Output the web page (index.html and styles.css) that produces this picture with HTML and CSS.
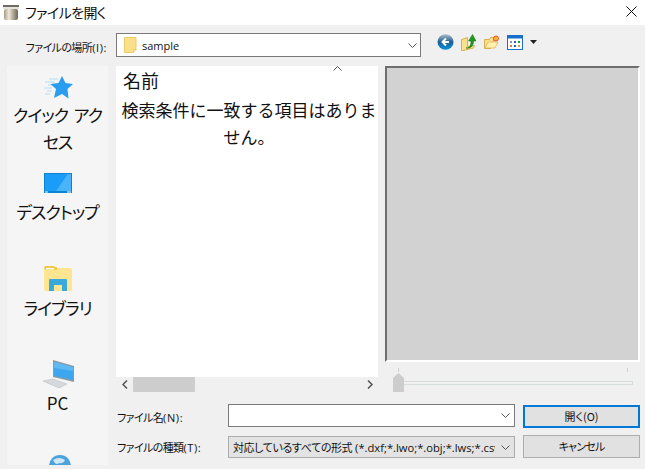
FILE: index.html
```html
<!DOCTYPE html>
<html lang="ja">
<head>
<meta charset="utf-8">
<title>ファイルを開く</title>
<link rel="stylesheet" href="styles.css">
</head>
<body>
<div class="dialog">
  <header class="titlebar">
    <svg class="app-icon" width="16" height="16" viewBox="0 0 16 16"><defs><linearGradient id="ag" x1="0" x2="1" y1="0" y2="0"><stop offset="0" stop-color="#a59c8a"/><stop offset=".35" stop-color="#efe8d6"/><stop offset=".7" stop-color="#a79f8d"/><stop offset="1" stop-color="#6d675b"/></linearGradient></defs><rect width="16" height="2" fill="#6e6a62"/><rect x="0" y="2" width="16" height="2" fill="#e4e2dc"/><rect x="1" y="4" width="14" height="11" rx="2" fill="url(#ag)"/></svg>
    <span class="title">ファイルを開く</span>
    <svg class="close" width="11" height="11" viewBox="0 0 11 11"><path d="M.5.5l10 10M10.500.5l-10 10" stroke="#111" stroke-width="1" fill="none"/></svg>
  </header>

  <div class="location-row">
    <label class="loc-label"><span class="lbl-jp">ファイルの場所</span><span class="lbl-key">(I):</span></label>
    <div class="loc-box">
      <svg width="13" height="16" viewBox="0 0 13 16"><path d="M.5.5h11.500v12.500l-2.500 2.500H.5z" fill="#fbe08a" stroke="#eccb6a"/><path d="M9.500 15.500v-3h3" fill="#fff3c4" stroke="#eccb6a"/></svg>
      <span class="loc-text">sample</span>
      <svg class="chev" width="9" height="5" viewBox="0 0 9 5"><path d="M.5.500l4 4 4-4" stroke="#555" fill="none"/></svg>
    </div>
    <div class="tools">
      <svg width="17" height="16" viewBox="0 0 17 16"><defs><linearGradient id="bk" x1="0" x2="0" y1="0" y2="1"><stop offset="0" stop-color="#aebfca"/><stop offset=".5" stop-color="#1d5f96"/><stop offset="1" stop-color="#0b93dc"/></linearGradient></defs><ellipse cx="8.500" cy="8" rx="8" ry="7.800" fill="url(#bk)"/><path d="M9 4.500L5.500 8 9 11.500M5.500 8h6.500" stroke="#fff" stroke-width="2" fill="none"/></svg>
      <svg width="15" height="17" viewBox="0 0 15 17"><path d="M.5 5.500l6-2v9l7-1-1 2.500-12 3z" fill="#fbe08a" stroke="#d9b050"/><path d="M5 14c4 0 5-3 5-7H7.500L11.500.5 15 7h-2.500c0 5-3 8-7.500 7z" fill="#1f9a1f" stroke="#0d6d0d" stroke-width=".5"/></svg>
      <svg width="17" height="14" viewBox="0 0 17 14"><path d="M1.500 4.500h5l1-2h3v8l-3 3h-6z" fill="#fbe08a" stroke="#d9b050"/><path d="M2 13l3-6h10l-3 6z" fill="#fff0b0" stroke="#d9b050" stroke-width=".7"/><circle cx="13" cy="3.500" r="2.500" fill="#f6b23a" stroke="#e8552a"/></svg>
      <svg width="16" height="15" viewBox="0 0 16 15"><rect x=".5" y=".5" width="15" height="14" fill="#fff" stroke="#1a6fc9"/><rect x="1" y="1" width="14" height="2.500" fill="#1a6fc9"/><rect x="3" y="6" width="2" height="2" fill="#8b8fb0"/><rect x="7" y="6" width="2" height="2" fill="#2a5fb0"/><rect x="11" y="6" width="2" height="2" fill="#1e9a3a"/><rect x="3" y="10" width="2" height="2" fill="#e8703a"/><rect x="7" y="10" width="2" height="2" fill="#2a5fb0"/><rect x="11" y="10" width="2" height="2" fill="#e0a030"/></svg>
      <svg width="7" height="4" viewBox="0 0 7 4"><path d="M0 0h7L3.500 4z" fill="#222"/></svg>
    </div>
  </div>

  <div class="main">
    <nav class="sidebar">
      <div class="place place-quick">
        <svg class="icon-quick" width="30" height="23" viewBox="0 0 30 23"><path d="M6 3h9M2 6h10M5 9h5M1 12h8M4 15h5M2 18h5" stroke="#b5dcf8" stroke-width="1"/><path d="M19 0l3.500 7 7.500 1-5.500 5 1 9.500-6.500-4.500-8 4 2-9-5.500-5 8-1z" fill="#2a9df0"/></svg>
        <span class="kana">クイック アクセス</span>
      </div>
      <div class="place place-desktop">
        <svg class="icon-desktop" width="28" height="20" viewBox="0 0 28 20"><rect width="28" height="20" fill="#0a84d0"/><rect x="1" y="1" width="26" height="17" fill="#1a9cf8"/><path d="M12 18L24 1h3v17z" fill="#4ab4fb"/><path d="M1 19h3M23 19h4" stroke="#fff"/></svg>
        <span class="kana">デスクトップ</span>
      </div>
      <div class="place place-library">
        <svg class="icon-library" width="28" height="25" viewBox="0 0 28 25"><path d="M0 2q0-2 2-2h8l3 3h-13z" fill="#f2c94c"/><rect y="2" width="28" height="23" rx="2" fill="#fde592"/><rect x="1" y="1" width="12" height="3" fill="#f2c94c"/><rect x="2" y="2" width="8" height="1.500" fill="#fff"/><path d="M5 25v-11q0-1 1-1h16q1 0 1 1v11h-5v-6h-8v6z" fill="#39a9dc"/></svg>
        <span class="kana">ライブラリ</span>
      </div>
      <div class="place place-pc">
        <svg class="icon-pc" width="31" height="28" viewBox="0 0 31 28"><path d="M10 0l21 6v16l-21-5z" fill="#8d9aa3"/><path d="M11 2l19 5v13l-19-4z" fill="#3ea6ee"/><path d="M11 2l19 5v4L11 8z" fill="#6cc0f4" opacity=".7"/><path d="M0 21l10-2 14 5-8 4z" fill="#d6d9dc" stroke="#b5b9bd" stroke-width=".5"/></svg>
        <span>PC</span>
      </div>
      <div class="place">
        <svg width="28" height="24" viewBox="0 0 28 24"><rect x="0" y="11" width="8" height="7" fill="#3f93cf"/><circle cx="16" cy="12" r="11" fill="#4aa3dc"/><path d="M9 6q6-4 12 0-2 4-6 3-3 3-6-3zM19 12q4-1 6 1-1 5-5 6-3-3-1-7z" fill="#cfe6f5"/></svg>
      </div>
    </nav>

    <section class="files">
      <div class="list">
        <svg class="sort" width="9" height="5" viewBox="0 0 9 5"><path d="M.5 4.500l4-4 4 4" stroke="#555" fill="none"/></svg>
        <div class="col-head">名前</div>
        <div class="empty">検索条件に一致する項目はありません。</div>
      </div>
      <div class="hscroll">
        <svg width="6" height="9" viewBox="0 0 6 9"><path d="M5 .5l-4 4 4 4" stroke="#505050" stroke-width="1.500" fill="none"/></svg>
        <div class="track"><div class="thumb"></div></div>
        <svg width="6" height="9" viewBox="0 0 6 9"><path d="M1 .5l4 4-4 4" stroke="#505050" stroke-width="1.500" fill="none"/></svg>
      </div>
    </section>

    <aside class="preview-col">
      <div class="preview"></div>
      <div class="slider">
        <span class="tick tick-l"></span>
        <span class="tick tick-r"></span>
        <span class="groove"></span>
        <svg class="knob" width="11" height="19" viewBox="0 0 11 19"><path d="M0 5l5.500-5L11 5v14H0z" fill="#cdcdcd"/></svg>
      </div>
    </aside>

    <div class="form">
      <label class="f-label"><span class="lbl-jp">ファイル名</span><span class="lbl-key">(N):</span></label>
      <div class="combo combo-edit">
        <svg class="chev" width="9" height="5" viewBox="0 0 9 5"><path d="M.5.500l4 4 4-4" stroke="#555" fill="none"/></svg>
      </div>
      <button class="btn btn-default">開く(O)</button>
      <label class="f-label"><span class="lbl-jp">ファイルの種類</span><span class="lbl-key">(T):</span></label>
      <div class="combo combo-select">
        <span class="combo-text"><span class="combo-jp">対応しているすべての形式</span> (*.dxf;*.lwo;*.obj;*.lws;*.csv;*.stl)</span>
        <svg class="chev" width="9" height="5" viewBox="0 0 9 5"><path d="M.5.500l4 4 4-4" stroke="#555" fill="none"/></svg>
      </div>
      <button class="btn btn-cancel">キャンセル</button>
    </div>
  </div>
</div>
</body>
</html>
```
FILE: styles.css
```css
* { box-sizing: border-box; }
html, body { margin: 0; height: 100%; overflow: hidden; }
body {
  font-family: "Noto Sans CJK JP", "Noto Sans", sans-serif;
  color: #111;
  background: #f0f0f0;
}
.dialog { width: 645px; height: 469px; display: flex; flex-direction: column; }

.titlebar {
  height: 25px;
  background: #fff;
  display: flex;
  align-items: center;
  padding: 0 8px 0 3px;
  flex: none;
}
.app-icon { margin-right: 6px; margin-top: 0; }
.title { font-size: 14px; line-height: 20px; font-feature-settings: "palt"; letter-spacing: -.6px; flex: 1; margin-top: -2px; }
.close { margin-top: -3px; }

.location-row {
  height: 41px;
  flex: none;
  display: flex;
  align-items: flex-start;
  padding: 8px 0 0 0;
}
.loc-label {
  width: 116px;
  padding-right: 9px;
  text-align: right;
  line-height: 24px;
  white-space: nowrap;
}
.lbl-jp { font-size: 11px; font-feature-settings: "palt"; letter-spacing: -.6px; }
.lbl-key { font-family: "Open Sans", sans-serif; font-size: 11px; letter-spacing: .6px; }
.loc-box {
  width: 305px;
  height: 24px;
  background: #fff;
  border: 1px solid #7a7a7a;
  display: flex;
  align-items: center;
  padding: 0 3px 0 7px;
}
.loc-text { flex: 1; font-family: "Open Sans", sans-serif; font-size: 11px; margin-left: 5px; }
.tools { display: flex; align-items: center; gap: 7px; margin-left: 16px; height: 24px; margin-top: -3px; }

.main {
  flex: 1;
  min-height: 0;
  display: grid;
  grid-template-columns: 7px 101px 8px 262px 7px 255px 5px;
  grid-template-rows: 296px 42px 1fr;
}
.sidebar {
  grid-column: 2;
  grid-row: 1 / 4;
  background: #f5f5f5;
  overflow: hidden;
  height: 399px;
  display: flex;
  flex-direction: column;
}
.place {
  flex: none;
  height: 94px;
  display: flex;
  flex-direction: column;
  align-items: center;
  text-align: center;
  padding-top: 10px;
}
.place-quick { height: 97px; }
.place-desktop { height: 93px; }
.place span { font-size: 17px; line-height: 27px; display: block; }
.place .kana { font-feature-settings: "palt"; letter-spacing: -1px; word-spacing: 3px; }
.icon-quick { margin-bottom: 2px; }
.icon-desktop { margin-bottom: 5px; }
.icon-library { margin-bottom: 3px; }
.icon-pc { margin-bottom: 1px; margin-left: 1px; }

.files { grid-column: 4; grid-row: 1 / 3; display: flex; flex-direction: column; }
.list {
  height: 311px;
  background: #fff;
  position: relative;
  padding: 3px 0 0 0;
}
.sort { position: absolute; left: 217px; top: 0; }
.col-head { font-size: 18px; line-height: 22px; padding-left: 7px; }
.empty { font-size: 17px; line-height: 27px; text-align: center; margin-top: 5px; padding-left: 4px; }
.hscroll { height: 15px; display: flex; align-items: center; padding: 0 5px 0 6px; }
.track { flex: 1; height: 15px; margin: 0 5px; }
.thumb { width: 62px; height: 15px; background: #cdcdcd; }

.preview-col { grid-column: 6; grid-row: 1 / 3; display: flex; flex-direction: column; }
.preview {
  height: 296px;
  background: #d2d2d2;
  border: 2px solid;
  border-color: #6e6e6e #fff #fff #6e6e6e;
}
.slider { height: 34px; position: relative; }
.tick { position: absolute; top: 6px; width: 1px; height: 4px; background: #cfcfcf; }
.tick-l { left: 13px; }
.tick-r { left: 242px; }
.groove { position: absolute; left: 8px; right: 7px; top: 19px; height: 4px; background: #f0f0f0; border: 1px solid #d6dcd8; }
.knob { position: absolute; left: 8px; top: 11px; }

.form {
  grid-column: 4 / 7;
  grid-row: 3;
  display: grid;
  grid-template-columns: 104px 287px 117px;
  grid-template-rows: 24px 23px;
  column-gap: 8px;
  row-gap: 7px;
  align-items: center;
  align-self: start;
}
.f-label { line-height: 24px; white-space: nowrap; padding-left: 1px; }
.combo {
  height: 23px;
  border: 1px solid #7a7a7a;
  display: flex;
  align-items: center;
  padding: 0 4px 0 4px;
  background: #fff;
  overflow: hidden;
  justify-content: flex-end;
  align-self: start;
}
.combo-select { background: #e3e3e3; border-color: #acacac; justify-content: flex-start; height: 22px; align-self: end; }
.combo-text {
  font-family: "Open Sans", "Noto Sans CJK JP", sans-serif;
  font-size: 11.2px;
  flex: 1;
  min-width: 0;
  white-space: nowrap;
  overflow: hidden;
}
.combo-jp { font-family: "Noto Sans CJK JP", sans-serif; font-size: 11px; font-feature-settings: "palt"; letter-spacing: -.4px; }
.combo .chev { flex: none; margin-left: 6px; }
.btn {
  height: 23px;
  width: 117px;
  font: 11px/1 "Noto Sans CJK JP", sans-serif;
  font-feature-settings: "palt";
  color: #111;
  background: #e1e1e1;
  border: 1px solid #adadad;
  padding: 0;
}
.btn-default { border: 2px solid #0078d7; align-self: end; }
.btn-cancel { letter-spacing: -.8px; }
```
